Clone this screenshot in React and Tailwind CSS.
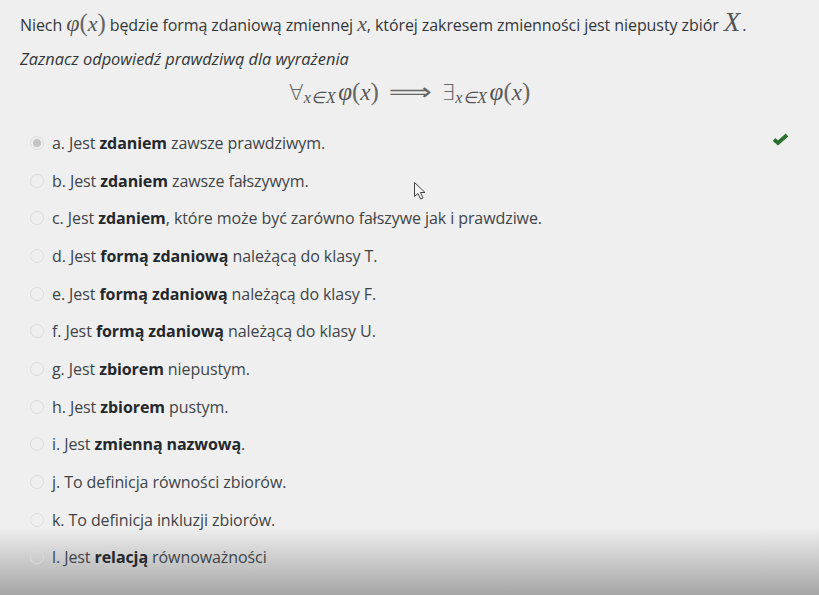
const font = "font-['Open_Sans','Noto_Sans',sans-serif]";

const options = [
	["a. Jest ", "zdaniem", " zawsze prawdziwym."],
	["b. Jest ", "zdaniem", " zawsze fałszywym."],
	["c. Jest ", "zdaniem", ", które może być zarówno fałszywe jak i prawdziwe."],
	["d. Jest ", "formą zdaniową", " należącą do klasy T."],
	["e. Jest ", "formą zdaniową", " należącą do klasy F."],
	["f. Jest ", "formą zdaniową", " należącą do klasy U."],
	["g. Jest ", "zbiorem", " niepustym."],
	["h. Jest ", "zbiorem", " pustym."],
	["i. Jest ", "zmienną nazwową", "."],
	["j. To definicja równości zbiorów.", "", ""],
	["k. To definicja inkluzji zbiorów.", "", ""],
	["l. Jest ", "relacją", " równoważności"],
];

function Math1({ children, className = "" }) {
	return <span className={"font-['Liberation_Serif',serif] italic text-[#555] " + className}>{children}</span>;
}

function Paren({ children }) {
	return <span className="font-['Liberation_Serif',serif] text-[25px] leading-none text-[#666]">{children}</span>;
}

function Formula({ sign }) {
	return (
		<span className="flex items-baseline">
			<span className="font-['DejaVu_Sans',sans-serif] text-[22px] leading-none font-extralight text-[#666]">{sign}</span>
			<Math1 className="text-[16px] leading-none relative top-[3px] tracking-[0.5px]">x∈X</Math1>
			<Math1 className="text-[25px] leading-none ml-[2px]">φ</Math1>
			<Paren>(</Paren>
			<Math1 className="text-[23px] leading-none">x</Math1>
			<Paren>)</Paren>
		</span>
	);
}

function Option({ parts, index }) {
	return (
		<div className="flex items-center h-[37.7px] pl-[30px] text-[#404448] text-[16px] tracking-[-0.08px]">
			<span className="w-[14px] h-[14px] rounded-full border border-[#dcdcdc] flex items-center justify-center shrink-0">
				{index === 0 && <span className="w-[8px] h-[8px] rounded-full bg-[#c4c4c4]" />}
			</span>
			<span className="ml-[8px] whitespace-pre">
				{parts[0]}
				{parts[1] && <b className="font-bold text-[#24282c]">{parts[1]}</b>}
				{parts[2]}
			</span>
		</div>
	);
}

export default function App() {
	return (
		<div className={"relative w-[819px] h-[595px] overflow-hidden bg-[#efefef] " + font}>
			{/* video fade at the bottom, sits behind the text */}
			<div className="absolute left-0 right-0 bottom-0 h-[68px] bg-gradient-to-b from-[#efefef] to-[#a6a6a6]" />
			<div className="relative">
				<div className="pt-[9px] pl-[20px]">
					<p className="flex items-baseline h-[29px] leading-[27px] text-[16px] tracking-[-0.08px] text-[#33373b] whitespace-pre">
						Niech <Math1 className="text-[24px] leading-none">φ</Math1>
						<Paren>(</Paren>
						<Math1 className="text-[22px] leading-none">x</Math1>
						<Paren>)</Paren> będzie formą zdaniową zmiennej <Math1 className="text-[22px] leading-none">x</Math1>, której zakresem zmienności jest niepusty zbiór <Math1 className="text-[27px] leading-none ml-[1px] mr-[2px]">X</Math1>.
					</p>
					<p className="mt-[9px] text-[16.4px] leading-[24px] italic text-[#33373b]">Zaznacz odpowiedź prawdziwą dla wyrażenia</p>
				</div>
				<div className="flex justify-center items-baseline gap-[14px] mt-[8px] h-[36px]">
					<Formula sign="∀" />
					<span className="font-['DejaVu_Sans',sans-serif] text-[24px] leading-none text-[#666] scale-x-125">⟹</span>
					<Formula sign="∃" />
				</div>
				<div className="mt-[9px]">
					{options.map((parts, i) => (
						<Option key={i} parts={parts} index={i} />
					))}
				</div>
			</div>
			{/* correct answer tick */}
			<svg className="absolute left-[772px] top-[132px]" width="17" height="14" viewBox="0 0 17 14">
				<path d="M2 7.5 L6 11 L15 3" fill="none" stroke="#2b6e2f" strokeWidth="3.8" />
			</svg>
			{/* mouse cursor */}
			<svg className="absolute left-[413px] top-[181px]" width="14" height="20" viewBox="0 0 14 20">
				<path d="M1.5 1.5 V15.5 L5 12.5 L7.5 18 L10 17 L7.5 11.5 H12 Z" fill="#f4f4f4" stroke="#444" strokeWidth="1" />
			</svg>
		</div>
	);
}
